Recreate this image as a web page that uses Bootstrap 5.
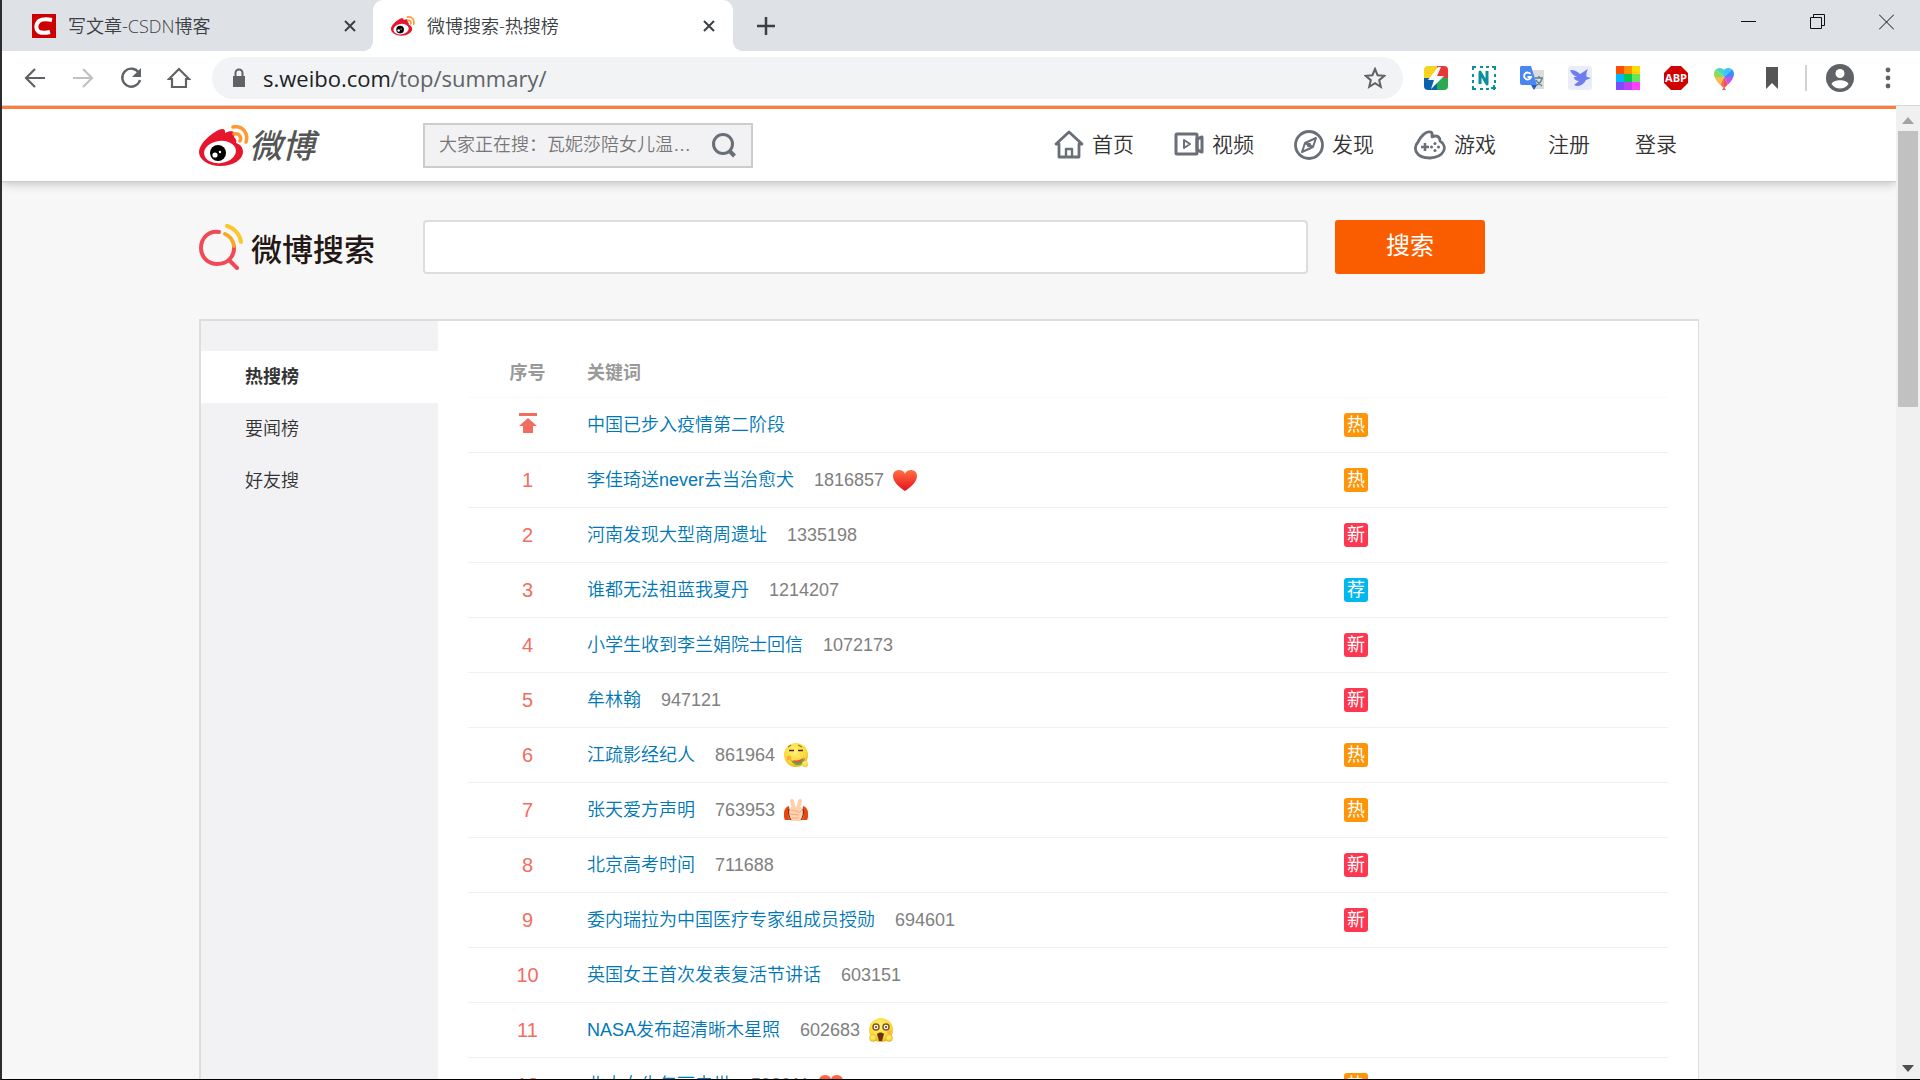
<!DOCTYPE html>
<html lang="zh-CN">
<head>
<meta charset="utf-8">
<meta name="viewport" content="width=device-width, initial-scale=1">
<title>微博搜索-热搜榜</title>
<link href="https://cdn.jsdelivr.net/npm/bootstrap@5.3.0/dist/css/bootstrap.min.css" rel="stylesheet">
<style>
  body { font-family: "Liberation Sans", "Noto Sans CJK SC", sans-serif; font-size: 18px; line-height: 24px; color: #333; background: #f7f7f7; border-left: 2px solid #2d2d2f; border-bottom: 1px solid #000; }
  svg { display: block; flex: none; }
  .cjk-light { font-weight: 350; }
  a { text-decoration: none; }

  /* browser window */
  .tabstrip { height: 51px; flex: none; background: #dee1e6; }
  .tab-item { width: 360px; padding: 0 14px 0 18px; gap: 12px; font-family: "Open Sans", "Noto Sans CJK SC", sans-serif; color: #3c4043; position: relative; }
  .tab-first { width: 371px; padding-left: 30px; padding-right: 16px; }
  .tab-active { background: #fff; border-radius: 10px 10px 0 0; }
  .tab-active::before, .tab-active::after { content: ""; position: absolute; bottom: 0; width: 10px; height: 10px; }
  .tab-active::before { right: 100%; background: radial-gradient(circle at 0 0, transparent 10px, #fff 10px); }
  .tab-active::after { left: 100%; background: radial-gradient(circle at 100% 0, transparent 10px, #fff 10px); }
  .plain-btn { border: 0; background: none; padding: 0; line-height: 0; color: inherit; }
  .win-controls { gap: 54px; padding-right: 26px; padding-bottom: 8px; color: #111; }
  .toolbar { height: 55px; flex: none; background: #fff; border-bottom: 1px solid #d5d7da; padding: 0 22px 0 21px; }
  .nav-keys { gap: 24px; color: #5f6368; }
  .omnibox { height: 42px; border-radius: 21px; background: #f1f3f4; margin-left: 21px; margin-right: 21px; padding: 0 17px; gap: 14px; color: #5f6368; }
  .addr { font-family: "Open Sans", sans-serif; font-size: 22px; line-height: 28px; color: #5f6368; }
  .addr span { color: #202124; }
  .ext-icons { gap: 24px; }
  .bar-rule { width: 2px; height: 26px; background: #d0d2d4; margin: 0 19px 0 21px; }
  .scroll-track { width: 24px; background: #f0f0f0; padding: 7px 2px; }
  .scroll-thumb { height: 276px; background: #c1c1c1; margin-top: 7px; }

  /* site header */
  .site-top { border-top: 3px solid #ff7e3e; height: 76px; background: #fff; border-bottom: 1px solid #c9cbcd; box-shadow: 0 1px 10px rgba(0,0,0,.25); position: relative; }
  .wrap-main { width: 100%; max-width: 1500px; margin: 0 auto; }
  .brand-col { width: 224px; }
  .brand-name { font-size: 33px; line-height: 40px; font-style: italic; font-weight: 500; color: #555; padding-top: 4px; }
  .quick-find { width: 330px; height: 45px; border: 2px solid #ccc; background: #f2f2f5; padding: 0 14px; }
  .quick-find input { border: 0; outline: 0; background: none; font-size: 18px; padding: 0; min-width: 0; font-weight: 350; color: #777; }
  .quick-find input::placeholder { color: #777; opacity: 1; }
  .top-links { gap: 40px; padding-right: 22px; font-size: 21px; font-weight: 350; }
  .top-links a { color: #333; gap: 8px; }
  .top-links svg { color: #696e78; }
  .sign-links { gap: 45px; padding-left: 12px; }

  /* search area */
  .find-area { padding: 38px 0 45px; }
  .find-name { font-size: 31px; line-height: 40px; font-weight: 500; color: #231815; padding-top: 8px; }
  .find-box { width: 885px; height: 54px; border: 2px solid #ddd; border-radius: 4px; background: #fff; outline: 0; padding: 0 14px; }
  .find-btn, .find-btn:hover { width: 150px; height: 54px; border: 0; border-radius: 3px; margin-left: 27px; background: #fa5d00; color: #fff; font-size: 24px; line-height: 24px; padding: 0 0 2px; }

  /* list panel */
  .panel-box { background: #fff; border: 1px solid #ddd; border-top-width: 2px; border-left-width: 2px; }
  .side-menu { width: 237px; background: #f2f2f5; padding-top: 30px; font-weight: 350; flex: none; }
  .side-menu a { display: block; height: 52px; line-height: 52px; padding-left: 44px; color: #333; }
  .side-menu a.active { background: #fff; font-weight: 700; }
  .list-area { padding: 29px 30px 0; }
  .hot-table { margin: 0; table-layout: fixed; }
  .hot-table th, .hot-table td { padding: 0; vertical-align: middle; border-bottom: 1px solid #f0f0f2; }
  .hot-table th { height: 47px; color: #999; font-weight: 700; border-color: #f9f9f9; }
  .hot-table td { height: 55px; }
  .col-no { width: 119px; text-align: center; }
  .col-tag { width: 324px; }
  td.col-no { color: #f26d5f; font-size: 20px; }
  .kw { color: #0078b6; font-weight: 350; }
  .hits { color: #808080; margin-left: 20px; }
  .face { margin-left: 9px; }
  .flag { display: block; width: 24px; height: 24px; border-radius: 3px; color: #fff; font-size: 18px; line-height: 24px; text-align: center; }
  .f-hot { background: #ff9406; } .f-new { background: #ff3852; } .f-rec { background: #00b7ee; }
</style>
</head>
<body class="vh-100 overflow-hidden d-flex flex-column">

<svg width="0" height="0" class="position-absolute" aria-hidden="true">
  <defs>
    <linearGradient id="red" x1="0" y1="0" x2="0" y2="1"><stop offset="0" stop-color="#ff7043"/><stop offset="1" stop-color="#e8101c"/></linearGradient>
    <radialGradient id="yel" cx=".45" cy=".35" r=".7"><stop offset="0" stop-color="#fff27a"/><stop offset=".7" stop-color="#fbd735"/><stop offset="1" stop-color="#e2a520"/></radialGradient>
  </defs>
  <symbol id="eye" viewBox="0 0 50 41">
    <path d="M35 12c2-6-3-7-9-4 1-5-4-5-10-1C8 12 0 20 0 27c0 8 10 14 21 14 14 0 23-7 23-14 0-5-3-8-7-9 1-2 0-4-2-6z" fill="#e6162d"/>
    <ellipse cx="21" cy="27" rx="16" ry="11" fill="#fff" transform="rotate(-8 21 27)"/>
    <circle cx="19" cy="28" r="8" fill="#000"/><circle cx="16" cy="30" r="2.600" fill="#fff"/><circle cx="21" cy="27" r="1.200" fill="#fff"/>
    <path d="M34 2c9-2 16 6 13 15M35 9c5-1 8 3 6 7" fill="none" stroke="#ff9933" stroke-width="3.500" stroke-linecap="round"/>
  </symbol>
  <symbol id="heart" viewBox="0 0 24 24"><path d="M12 23C6 19 0 14 0 8c0-4 3-6 6-6 3 0 5 1 6 4 1-3 3-4 6-4 3 0 6 2 6 6 0 6-6 11-12 15z" fill="url(#red)"/></symbol>
  <symbol id="x" viewBox="0 0 14 14"><path d="M2 2l10 10M12 2L2 12" stroke="currentColor" stroke-width="2"/></symbol>
</svg>

<!-- tabs -->
<div class="tabstrip d-flex">
  <div class="tab-item tab-first d-flex align-items-center">
    <svg width="24" height="24" viewBox="0 0 24 24"><path d="M0 0h24v24H0z" fill="#c00"/><path d="M20 6c-5-1-10-1-13 1-4 4-3 9 0 11 3 1 7 1 11 0" fill="none" stroke="#fff" stroke-width="4"/></svg>
    <span class="flex-grow-1 cjk-light">写文章-CSDN博客</span>
    <button class="plain-btn" aria-label="关闭标签页"><svg width="14" height="14"><use href="#x"/></svg></button>
  </div>
  <div class="tab-item tab-active d-flex align-items-center">
    <svg width="24" height="20"><use href="#eye"/></svg>
    <span class="flex-grow-1 cjk-light">微博搜索-热搜榜</span>
    <button class="plain-btn" aria-label="关闭标签页"><svg width="20" height="14"><use href="#x"/></svg></button>
  </div>
  <button class="plain-btn ps-4" aria-label="新标签页"><svg width="18" height="18" viewBox="0 0 18 18"><path d="M9 0v18M0 9h18" stroke="#3c4043" stroke-width="2.500"/></svg></button>
  <div class="win-controls d-flex align-items-center ms-auto">
    <button class="plain-btn" aria-label="最小化"><svg width="15" height="16" viewBox="0 0 15 16"><path d="M0 7.500h15" stroke="currentColor"/></svg></button>
    <button class="plain-btn" aria-label="还原"><svg width="15" height="16" viewBox="0 0 15 16"><path d="M.5 3.500h11v11H.5zM3.500 3V.5h11v11H12" fill="none" stroke="currentColor"/></svg></button>
    <button class="plain-btn" aria-label="关闭"><svg width="15" height="16" viewBox="0 0 15 16"><path d="M0 .5l15 15M15 .5l-15 15" stroke="currentColor"/></svg></button>
  </div>
</div>

<!-- toolbar -->
<div class="toolbar d-flex align-items-center">
  <div class="nav-keys d-flex">
    <button class="plain-btn" aria-label="后退"><svg width="24" height="24" viewBox="0 0 24 24" fill="none" stroke="currentColor" stroke-width="2.200"><path d="M22 12H3M12 3l-9 9 9 9"/></svg></button>
    <button class="plain-btn" aria-label="前进"><svg width="24" height="24" viewBox="0 0 24 24" fill="none" stroke="#bfc1c4" stroke-width="2.200"><path d="M2 12h19M12 3l9 9-9 9"/></svg></button>
    <button class="plain-btn" aria-label="重新加载"><svg width="24" height="24" viewBox="0 0 24 24" fill="none" stroke="currentColor" stroke-width="2.400"><path d="M20 7a9 9 0 1 0 1 7"/><path d="M22 2v9h-9z" fill="currentColor" stroke="none"/></svg></button>
    <button class="plain-btn" aria-label="主页"><svg width="24" height="24" viewBox="0 0 24 24" fill="none" stroke="currentColor" stroke-width="2.200"><path d="M2 13L12 3l10 10h-3v8H5v-8z"/></svg></button>
  </div>
  <div class="omnibox d-flex align-items-center flex-grow-1">
    <svg width="20" height="20" viewBox="0 0 20 20"><path d="M4 8h12v11H4z" fill="#5f6368"/><path d="M6.500 9V5a3.500 3.500 0 0 1 7 0v4" fill="none" stroke="#5f6368" stroke-width="2"/></svg>
    <a class="addr flex-grow-1" href="#"><span>s.weibo.com</span>/top/summary/</a>
    <button class="plain-btn" aria-label="收藏"><svg width="22" height="22" viewBox="0 0 22 22"><path d="M11 2l2.600 6.200 6.700.6-5.100 4.400 1.600 6.600L11 16.200l-5.800 3.600 1.600-6.600L1.700 8.800l6.700-.6z" fill="none" stroke="#5f6368" stroke-width="2"/></svg></button>
  </div>
  <div class="ext-icons d-flex align-items-center">
    <svg width="24" height="24" viewBox="0 0 24 24"><path d="M4 0h9v12H0V4a4 4 0 0 1 4-4z" fill="#f7d31d"/><path d="M13 0h7a4 4 0 0 1 4 4v8H13z" fill="#e53935"/><path d="M0 12h13v12H4a4 4 0 0 1-4-4z" fill="#0a62ae"/><path d="M13 12h11v8a4 4 0 0 1-4 4h-7z" fill="#2ba852"/><path d="M14 1L4 14h6L7 23l13-13h-7l4-9z" fill="#fff"/></svg>
    <svg width="24" height="24" viewBox="0 0 24 24" fill="none" stroke="#0a8f9c" stroke-width="2"><path d="M1 4V1h3M8 1h3M14 1h3M20 1h3v3M23 8v3M23 14v3M1 8v3M1 14v3M1 20v3h3M8 23h3M14 23h3M22 19v5M19 22h5"/><path d="M8 18V6l7 12V5" stroke-width="3" stroke-linejoin="round"/></svg>
    <svg width="24" height="24" viewBox="0 0 24 24"><path d="M10 4h14v19H14z" fill="#dcdcdc"/><path d="M1 0h10l6 19H2a2 2 0 0 1-2-2V1z" fill="#4a86f0"/><path d="M11 19h6l-3 5z" fill="#2a56c6"/><path d="M10.500 8A3.500 3.500 0 1 0 11 11H7.500" fill="none" stroke="#fff" stroke-width="1.800"/><path d="M15 12h8M19 10v2M22 13c-1 3-3 5-5 6M16 14c1 2 3 4 6 6" fill="none" stroke="#607d8b" stroke-width="1.400"/></svg>
    <svg width="24" height="24" viewBox="0 0 24 24"><rect width="24" height="24" rx="3" fill="#e9edfa"/><path d="M2 4c5 0 8 2 10 4l8-5c-2 4-2 7-1 8l4 1-5 2c-3 6-8 7-12 5l5-4c-4 0-5-3-5-4h3C5 9 3 7 2 4z" fill="#6f7cf0"/></svg>
    <svg width="24" height="24" viewBox="0 0 24 24"><path d="M0 0h8v8H0z" fill="#ff4d00"/><path d="M8 0h8v8H8z" fill="#ff9100"/><path d="M16 0h8v8h-8z" fill="#ffd600"/><path d="M0 8h8v8H0z" fill="#00b8ff"/><path d="M8 8h8v8H8z" fill="#00c853"/><path d="M16 8h8v8h-8z" fill="#69e35b"/><path d="M0 16h8v8H0z" fill="#7c4dff"/><path d="M8 16h8v8H8z" fill="#c43cf5"/><path d="M16 16h8v8h-8z" fill="#ff40ff"/></svg>
    <svg width="24" height="24" viewBox="0 0 24 24"><path d="M7 0h10l7 7v10l-7 7H7l-7-7V7z" fill="#d10000"/><text x="12" y="16" text-anchor="middle" font-family="Open Sans" font-weight="700" font-size="11" fill="#fff">ABP</text></svg>
    <svg width="24" height="24" viewBox="0 0 24 24"><clipPath id="hc"><path d="M12 22C7 18 2 13 2 8c0-4 3-6 6-6 2 0 3 1 4 2 1-1 2-2 4-2 3 0 6 2 6 6 0 5-5 10-10 14z"/></clipPath><g clip-path="url(#hc)"><path d="M12 11L0 0v11z" fill="#8bdc5a"/><path d="M12 11L0 0h12z" fill="#4cd6c0"/><path d="M12 11V0h12z" fill="#38c6ff"/><path d="M12 11L24 0v11z" fill="#3f8cff"/><path d="M12 11h12l-6 12z" fill="#c354e8"/><path d="M12 11l6 12h-6z" fill="#f34b6a"/><path d="M12 11v12H6z" fill="#ff7043"/><path d="M12 11L6 23 0 11z" fill="#f6bd4a"/></g><path d="M12 21l2 3h-4z" fill="#e8603c"/></svg>
    <svg width="24" height="24" viewBox="0 0 24 24"><path d="M6 1h12v22l-6-6-6 6z" fill="#555"/></svg>
  </div>
  <div class="bar-rule"></div>
  <button class="plain-btn" aria-label="用户"><svg width="28" height="28" viewBox="0 0 28 28"><circle cx="14" cy="14" r="14" fill="#5f6368"/><circle cx="14" cy="9.500" r="4.500" fill="#fff"/><path d="M5.500 20c2-5 15-5 17 0-4 6-13 6-17 0z" fill="#fff"/></svg></button>
  <button class="plain-btn ps-4" aria-label="菜单"><svg width="20" height="24" viewBox="0 0 20 24" fill="#5f6368"><circle cx="10" cy="4" r="2.400"/><circle cx="10" cy="12" r="2.400"/><circle cx="10" cy="20" r="2.400"/></svg></button>
</div>

<div class="d-flex flex-grow-1 overflow-hidden">
  <div class="flex-grow-1 overflow-hidden">

    <header class="site-top d-flex">
      <div class="wrap-main d-flex align-items-center">
        <a class="brand-col d-flex align-items-center" href="#"><svg width="50" height="41"><use href="#eye"/></svg><span class="brand-name">微博</span></a>
        <form class="quick-find d-flex align-items-center">
          <input class="flex-grow-1" type="text" aria-label="大家正在搜" placeholder="大家正在搜：瓦妮莎陪女儿温…">
          <button class="plain-btn" type="button" aria-label="搜索"><svg width="26" height="26" viewBox="0 0 26 26" fill="none" stroke="#696e78" stroke-width="3"><circle cx="12" cy="12" r="9.500"/><path d="M18.500 19l5 5" stroke-width="4"/></svg></button>
        </form>
        <nav class="top-links d-flex align-items-center ms-auto">
          <a class="d-flex align-items-center" href="#"><svg width="30" height="30" viewBox="0 0 30 30" fill="none" stroke="currentColor" stroke-width="2.800" stroke-linejoin="round" stroke-linecap="round"><path d="M2 14L15 2l13 12h-3v13H5V14z"/><path d="M12 26v-7h6v7" stroke-width="2.400"/></svg>首页</a>
          <a class="d-flex align-items-center" href="#"><svg width="30" height="30" viewBox="0 0 30 30" fill="none" stroke="currentColor" stroke-width="3" stroke-linejoin="round"><rect x="2" y="4" width="21" height="20" rx="1"/><path d="M23 9l5-2v15l-5-2z"/><path d="M10 10l6 4-6 4z" stroke-width="2"/></svg>视频</a>
          <a class="d-flex align-items-center" href="#"><svg width="30" height="30" viewBox="0 0 30 30" fill="none" stroke="currentColor" stroke-width="2.800" stroke-linejoin="round"><circle cx="15" cy="15" r="13.500"/><path d="M22 8l-3 9-11 5 3-9zM11 13l8 4" stroke-width="2"/><circle cx="15" cy="15" r="1.500" stroke-width="1.500"/></svg>发现</a>
          <a class="d-flex align-items-center" href="#"><svg width="32" height="30" viewBox="0 0 32 30" fill="none" stroke="currentColor" stroke-width="2.800" stroke-linejoin="round"><path d="M4 12C7 6 12 1 16 2c3 0 2 3 2 5 4-2 8-1 8 4 8 5 5 16-10 17C1 28-1 18 4 12z"/><path d="M7 17h8M11 13v8" stroke-width="2.600"/><g fill="currentColor" stroke="none"><circle cx="21" cy="13.500" r="1.500"/><circle cx="21" cy="20.500" r="1.500"/><circle cx="17.500" cy="17" r="1.500"/><circle cx="24.500" cy="17" r="1.500"/></g></svg>游戏</a>
          <div class="sign-links d-flex"><a href="#">注册</a><a href="#">登录</a></div>
        </nav>
      </div>
    </header>

    <div class="wrap-main">
      <form class="find-area d-flex align-items-center">
        <a class="brand-col d-flex align-items-center flex-shrink-0" href="#"><svg width="52" height="46" viewBox="0 0 52 46" fill="none" stroke-width="4" stroke-linecap="round"><path d="M20 8C9 6 2 15 2 24c0 10 8 16 16 16 11 0 18-8 17-18M31 37l7 7" stroke="#ef4a58"/><path d="M26 10c5 2 8 6 9 12" stroke="#f6a723"/><path d="M28 2c7 2 13 8 14 16" stroke="#f9c72f"/></svg><span class="find-name">微博搜索</span></a>
        <input class="find-box" type="text" aria-label="搜索关键词">
        <button class="btn find-btn" type="button">搜索</button>
      </form>

      <main class="panel-box d-flex">
        <nav class="side-menu">
          <a class="active" href="#">热搜榜</a>
          <a href="#">要闻榜</a>
          <a href="#">好友搜</a>
        </nav>
        <div class="list-area flex-grow-1">
          <table class="table hot-table">
            <thead><tr><th class="col-no" scope="col">序号</th><th scope="col">关键词</th><th class="col-tag"></th></tr></thead>
            <tbody>
              <tr><td class="col-no"><svg class="mx-auto" width="18" height="24" viewBox="0 0 18 24" fill="#f26d5f"><path d="M0 0h18v3H0zM9 5l9 8h-4v7H4v-7H0z"/></svg></td><td><a class="kw" href="#">中国已步入疫情第二阶段</a></td><td><span class="flag f-hot">热</span></td></tr>
              <tr><td class="col-no">1</td><td><div class="d-flex align-items-center"><a class="kw" href="#">李佳琦送never去当治愈犬</a><span class="hits">1816857</span><svg class="face" width="24" height="24"><use href="#heart"/></svg></div></td><td><span class="flag f-hot">热</span></td></tr>
              <tr><td class="col-no">2</td><td><a class="kw" href="#">河南发现大型商周遗址</a><span class="hits">1335198</span></td><td><span class="flag f-new">新</span></td></tr>
              <tr><td class="col-no">3</td><td><a class="kw" href="#">谁都无法祖蓝我夏丹</a><span class="hits">1214207</span></td><td><span class="flag f-rec">荐</span></td></tr>
              <tr><td class="col-no">4</td><td><a class="kw" href="#">小学生收到李兰娟院士回信</a><span class="hits">1072173</span></td><td><span class="flag f-new">新</span></td></tr>
              <tr><td class="col-no">5</td><td><a class="kw" href="#">牟林翰</a><span class="hits">947121</span></td><td><span class="flag f-new">新</span></td></tr>
              <tr><td class="col-no">6</td><td><div class="d-flex align-items-center"><a class="kw" href="#">江疏影经纪人</a><span class="hits">861964</span><svg class="face" width="24" height="24" viewBox="0 0 24 24"><circle cx="12" cy="12" r="12" fill="url(#yel)"/><path d="M4 4l3-2M14 2l4 2" stroke="#a9741b" stroke-width="1.200"/><path d="M5 7.500h5M14 7.500h5" stroke="#4a2c0d" stroke-width="1.400"/><path d="M7 17c3 8 13 6 14-2-4 4-9 5-14 2z" fill="#5aa84c"/><path d="M9 17c3 5 9 3 11-3-3 3-7 4-11 3z" fill="#ee5138"/><circle cx="5" cy="15" r="2.500" fill="#ffb043"/><circle cx="21" cy="21" r="3" fill="url(#yel)"/></svg></div></td><td><span class="flag f-hot">热</span></td></tr>
              <tr><td class="col-no">7</td><td><div class="d-flex align-items-center"><a class="kw" href="#">张天爱方声明</a><span class="hits">763953</span><svg class="face" width="24" height="24" viewBox="0 0 24 24"><path d="M5 8C-1 9-1 19 1 22h6zM19 8c6 1 6 11 4 14h-6z" fill="#e8480f"/><path d="M7 9c-4 4-3 13 1 14h8c4-1 5-10 1-14z" fill="#ffd2b0"/><path d="M10 11L8 3M14 11l2-8" stroke="#ffcfae" stroke-width="4" stroke-linecap="round"/><path d="M7 12l8 2M6 16l9 1M8 20h7M18 12l-3 3" stroke="#e9ac88" stroke-width="1" fill="none"/><path d="M5 11c-1 4 0 8 2 11M19 11c1 4 0 8-2 11" stroke="#6e1c08" fill="none"/></svg></div></td><td><span class="flag f-hot">热</span></td></tr>
              <tr><td class="col-no">8</td><td><a class="kw" href="#">北京高考时间</a><span class="hits">711688</span></td><td><span class="flag f-new">新</span></td></tr>
              <tr><td class="col-no">9</td><td><a class="kw" href="#">委内瑞拉为中国医疗专家组成员授勋</a><span class="hits">694601</span></td><td><span class="flag f-new">新</span></td></tr>
              <tr><td class="col-no">10</td><td><a class="kw" href="#">英国女王首次发表复活节讲话</a><span class="hits">603151</span></td><td></td></tr>
              <tr><td class="col-no">11</td><td><div class="d-flex align-items-center"><a class="kw" href="#">NASA发布超清晰木星照</a><span class="hits">602683</span><svg class="face" width="24" height="24" viewBox="0 0 24 24"><circle cx="12" cy="12" r="12" fill="url(#yel)"/><g fill="#fff" stroke="#8a5618" stroke-width="1.500"><circle cx="7" cy="9" r="3"/><circle cx="17" cy="9" r="3"/></g><circle cx="7" cy="9" r="1" fill="#432"/><circle cx="17" cy="9" r="1" fill="#432"/><path d="M8 16c2-2 5-2 7 0l-2 7h-3z" fill="#6b3208"/><circle cx="20" cy="14" r="2" fill="#ffae55"/><circle cx="4" cy="20" r="3.500" fill="url(#yel)" stroke="#e2a520" stroke-width=".5"/><circle cx="20" cy="20" r="3.500" fill="url(#yel)" stroke="#e2a520" stroke-width=".5"/></svg></div></td><td></td></tr>
              <tr><td class="col-no">12</td><td><div class="d-flex align-items-center"><a class="kw" href="#">北大女生包丽去世</a><span class="hits">593011</span><svg class="face" width="24" height="24"><use href="#heart"/></svg></div></td><td><span class="flag f-hot">热</span></td></tr>
            </tbody>
          </table>
        </div>
      </main>
    </div>
  </div>
  <div class="scroll-track d-flex flex-column flex-shrink-0">
    <svg class="mx-auto mt-1" width="12" height="7" viewBox="0 0 12 7"><path d="M6 0l6 7H0z" fill="#a3a3a3"/></svg>
    <div class="scroll-thumb"></div>
    <svg class="mx-auto mt-auto" width="12" height="7" viewBox="0 0 12 7"><path d="M0 0h12L6 7z" fill="#505050"/></svg>
  </div>
</div>

<script src="https://cdn.jsdelivr.net/npm/bootstrap@5.3.0/dist/js/bootstrap.bundle.min.js"></script>
</body>
</html>
